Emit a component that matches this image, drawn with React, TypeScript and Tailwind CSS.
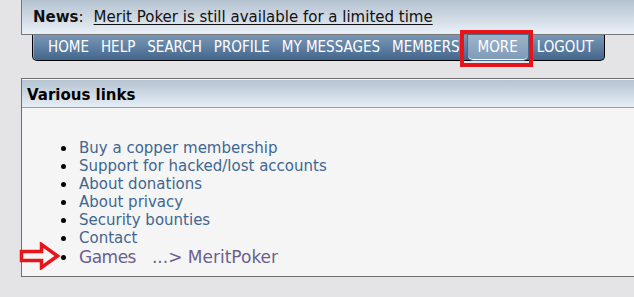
const navItems = ["HOME", "HELP", "SEARCH", "PROFILE", "MY MESSAGES", "MEMBERS", "MORE", "LOGOUT"];

const links = [
  "Buy a copper membership",
  "Support for hacked/lost accounts",
  "About donations",
  "About privacy",
  "Security bounties",
  "Contact",
];

function RedArrow() {
  return (
    <svg className="absolute left-[19px] top-[242px]" width="42" height="28" viewBox="0 0 42 28">
      <path
        d="M2.5 9.5 H22.5 V2.5 L38.5 14 L22.5 25.5 V18.5 H2.5 Z"
        fill="none"
        stroke="#e8141c"
        strokeWidth="3.5"
        strokeLinejoin="miter"
      />
    </svg>
  );
}

export default function App() {
  return (
    <div className="relative h-[297px] w-[634px] overflow-hidden bg-[#e4e4e6] font-['DejaVu_Sans',sans-serif]">
      {/* News bar */}
      <div className="ml-[21px] flex h-[35px] items-center border-b border-l border-[#777] bg-gradient-to-b from-[#b4c2d0] to-[#eaf0f7] pl-[11px] text-[15px] text-[#111]">
        <span className="font-bold">News</span>
        <span>:</span>
        <span className="ml-[10px] underline underline-offset-2">Merit Poker is still available for a limited time</span>
      </div>

      {/* Nav */}
      <div className="ml-[32px] inline-flex h-[26px] items-center rounded-b-[5px] border-x border-b border-black bg-gradient-to-b from-[#7a97b4] via-[#5f80a3] to-[#42658b] pl-[9px] pr-[4px] font-['DejaVu_Sans_Condensed','DejaVu_Sans',sans-serif] text-[15px] text-white shadow-[inset_1px_0_0_rgba(255,255,255,0.35)]">
        {navItems.map((item) =>
          item === "MORE" ? (
            <span
              key={item}
              className="ml-[2px] mr-[3px] flex h-full items-center rounded-b-[5px] border-b border-white bg-gradient-to-b from-[#9db4ca] to-[#7f9bb8] px-[10px] shadow-[0_0_0_1px_#4c6a8a]"
            >
              {item}
            </span>
          ) : (
            <span key={item} className="px-[6px] leading-none">
              {item}
            </span>
          )
        )}
      </div>

      {/* Various links panel */}
      <div className="ml-[21px] mt-[17px] border-y border-l border-[#6e6e6e] bg-[#f5f5f5] pb-[9px]">
        <div className="mt-px flex h-[28px] items-center border-b border-[#8f9fb0] bg-gradient-to-b from-[#b5c3d1] to-[#e6eef6] pl-[5px] pt-[3px] text-[15px] font-bold text-black">
          Various links
        </div>
        <ul className="mt-[31px] text-[15px] text-[#3f6690]">
          {links.map((l) => (
            <li key={l} className="flex h-[18px] items-center">
              <span className="ml-[39px] mr-[13px] h-[5px] w-[5px] rounded-full bg-black" />
              <span className="leading-[18px]">{l}</span>
            </li>
          ))}
          <li className="flex h-[20px] items-center text-[17px] text-[#6b5e90]">
            <span className="ml-[39px] mr-[13px] h-[5px] w-[5px] rounded-full bg-black" />
            <span className="leading-[20px] tracking-[-0.5px]">Games</span>
            <span className="ml-[16px] leading-[20px]">...&gt; MeritPoker</span>
          </li>
        </ul>
      </div>

      {/* Annotations */}
      <div className="absolute left-[460px] top-[30px] h-[37px] w-[73px] border-[4px] border-[#e8141c]" />
      <RedArrow />
    </div>
  );
}
